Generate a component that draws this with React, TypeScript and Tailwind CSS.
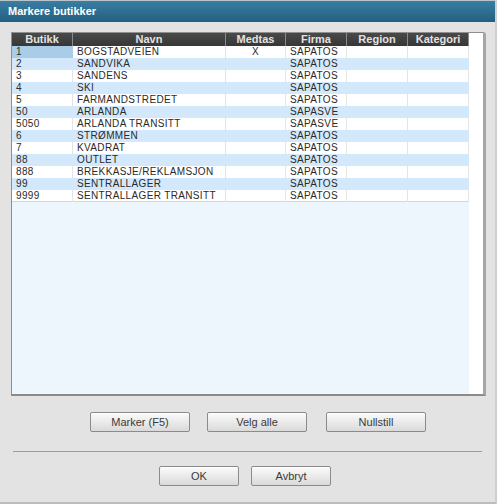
const rows: [string, string, string, string][] = [
  ['1', 'BOGSTADVEIEN', 'X', 'SAPATOS'],
  ['2', 'SANDVIKA', '', 'SAPATOS'],
  ['3', 'SANDENS', '', 'SAPATOS'],
  ['4', 'SKI', '', 'SAPATOS'],
  ['5', 'FARMANDSTREDET', '', 'SAPATOS'],
  ['50', 'ARLANDA', '', 'SAPASVE'],
  ['5050', 'ARLANDA TRANSITT', '', 'SAPASVE'],
  ['6', 'STRØMMEN', '', 'SAPATOS'],
  ['7', 'KVADRAT', '', 'SAPATOS'],
  ['88', 'OUTLET', '', 'SAPATOS'],
  ['888', 'BREKKASJE/REKLAMSJON', '', 'SAPATOS'],
  ['99', 'SENTRALLAGER', '', 'SAPATOS'],
  ['9999', 'SENTRALLAGER TRANSITT', '', 'SAPATOS'],
];

const headers = ['Butikk', 'Navn', 'Medtas', 'Firma', 'Region', 'Kategori'];
const cols = 'grid grid-cols-[61px_153px_60px_61px_61px_61px]';

function Button({ label, className }: { label: string; className: string }) {
  return (
    <button
      className={`h-[20px] border border-[#8b8b8b] rounded-[2px] bg-linear-to-b from-[#fbfbfb] to-[#dadada] text-[11px] leading-none text-[#3a3a3a] shadow-[inset_0_1px_0_#ffffff] ${className}`}
    >
      {label}
    </button>
  );
}

export default function App() {
  return (
    <div
      className="w-[497px] h-[504px] flex flex-col bg-[#e3e3e3] border-r-2 border-b-2 border-r-[#cfcfcf] border-b-[#bdbdbd] overflow-hidden"
      style={{ fontFamily: '"Liberation Sans", Arial, sans-serif' }}
    >
      {/* Tittellinje */}
      <div className="h-[22px] shrink-0 flex items-center pl-[8px] bg-linear-to-b from-[#3a7ea3] to-[#245f81] border-t border-t-[#b9c4cc]">
        <span className="text-[11px] font-bold text-white">Markere butikker</span>
      </div>

      {/* Tabell */}
      <div className="mt-[10px] ml-[11px] w-[475px] h-[364px] shrink-0 flex border-l border-t border-[#8f8f8f] border-r-[3px] border-r-[#a5a5a5] border-b-2 border-b-[#8a8a8a] rounded-tr-[3px] overflow-hidden">
        <div className="w-[457px] flex flex-col bg-[#eef6fd]">
          <div className={`${cols} h-[13px] bg-linear-to-b from-[#4a4a4a] to-[#363636]`}>
            {headers.map((h) => (
              <div
                key={h}
                className="border-r border-r-[#8a8a8a] text-center text-[11px] leading-[13px] font-bold text-[#e2e2e2]"
              >
                {h}
              </div>
            ))}
          </div>
          {rows.map((r, i) => (
            <div
              key={r[0]}
              className={`${cols} h-[12px] text-[10px] leading-[12px] tracking-[0.35px] text-[#2a2a2a] ${
                i % 2 === 1 ? 'bg-[#d4e8fb]' : 'bg-white'
              } ${i === rows.length - 1 ? 'border-b border-b-[#d6d6d6]' : ''}`}
            >
              <div
                className={`pl-[4px] border-r ${
                  i === 0 ? 'bg-[#a9cde9] border-r-[#a9cde9]' : i % 2 === 1 ? 'border-r-[#d4e8fb]' : 'border-r-[#e4e4e4]'
                }`}
              >
                {r[0]}
              </div>
              <div className={`pl-[4px] border-r ${i % 2 === 1 ? 'border-r-[#d4e8fb]' : 'border-r-[#e4e4e4]'}`}>{r[1]}</div>
              <div className={`text-center border-r ${i % 2 === 1 ? 'border-r-[#d4e8fb]' : 'border-r-[#e4e4e4]'}`}>{r[2]}</div>
              <div className={`pl-[4px] border-r ${i % 2 === 1 ? 'border-r-[#d4e8fb]' : 'border-r-[#e4e4e4]'}`}>{r[3]}</div>
              <div className={`border-r ${i % 2 === 1 ? 'border-r-[#d4e8fb]' : 'border-r-[#e4e4e4]'}`} />
              <div className={`border-r ${i % 2 === 1 ? 'border-r-[#d4e8fb]' : 'border-r-[#e4e4e4]'}`} />
            </div>
          ))}
        </div>
        <div className="flex-1 bg-white" />
      </div>

      {/* Knapper */}
      <div className="mt-[16px] flex pl-[90px]">
        <Button label="Marker (F5)" className="w-[100px]" />
        <Button label="Velg alle" className="w-[100px] ml-[17px]" />
        <Button label="Nullstill" className="w-[100px] ml-[19px]" />
      </div>

      <div className="mt-[19px] ml-[13px] w-[469px] h-px bg-[#9c9c9c]" />

      <div className="mt-[14px] flex pl-[159px]">
        <Button label="OK" className="w-[80px]" />
        <Button label="Avbryt" className="w-[80px] ml-[12px]" />
      </div>
    </div>
  );
}
